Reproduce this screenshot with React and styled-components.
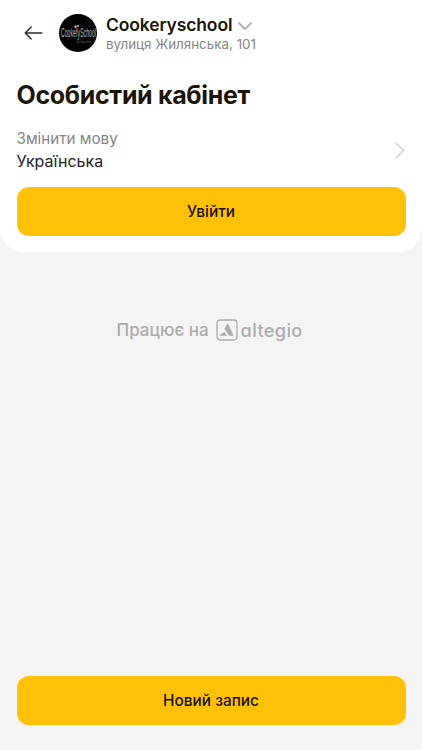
import React from "react";
import styled, { createGlobalStyle } from "styled-components";

const GlobalStyle = createGlobalStyle`
  * {
    box-sizing: border-box;
  }
  body {
    font-family: Inter, sans-serif;
    margin: 0;
    background: #f4f4f4;
    color: #1b1607;
  }
  h1, p {
    margin: 0;
  }
  button {
    font-family: inherit;
    border: none;
    cursor: pointer;
  }
`;

const Page = styled.div`
  display: flex;
  flex-direction: column;
  height: 100vh;
  min-height: 400px;
  overflow: hidden;
`;

const ProfileCard = styled.section`
  height: 252px;
  padding: 12px 16.5px 0;
  background: #fff;
  border-radius: 0 0 24px 24px;
`;

const Header = styled.header`
  display: flex;
  align-items: center;
  height: 42px;
`;

const IconButton = styled.button`
  display: flex;
  align-items: center;
  width: 42px;
  padding: 0 0 0 7px;
  background: none;
`;

const Avatar = styled.svg`
  display: block;
  flex: none;
  width: 38px;
  height: 38px;
`;

const Company = styled.div`
  margin-left: 9.5px;
  white-space: nowrap;
`;

const CompanyName = styled.div`
  display: flex;
  align-items: center;
  gap: 6px;
  font-size: 17.5px;
  font-weight: 600;
  letter-spacing: -0.13px;
  line-height: 22px;

  svg {
    margin-top: 3px;
  }
`;

const Address = styled.p`
  font-size: 13.4px;
  line-height: 17px;
  color: #858585;
`;

const Title = styled.h1`
  margin-top: 25px;
  font-size: 25px;
  font-weight: 700;
  letter-spacing: -0.34px;
  line-height: 32px;
  white-space: nowrap;
`;

const LanguageRow = styled.div`
  display: flex;
  align-items: center;
  justify-content: space-between;
  height: 46px;
  margin-top: 16px;
`;

const RowLabel = styled.p`
  font-size: 15.2px;
  line-height: 23px;
  color: #858585;
`;

const RowValue = styled.p`
  font-size: 16px;
  line-height: 23px;
  color: #24222d;
`;

const MainButton = styled.button`
  display: block;
  width: 100%;
  height: 49px;
  padding: 0;
  border-radius: 12px;
  background: #ffc107;
  color: #1b1200;
  font-size: 15.4px;
  font-weight: 500;
  line-height: 49px;
`;

const SignIn = styled.div`
  margin-top: 14px;
`;

const PoweredBy = styled.div`
  display: flex;
  align-items: center;
  height: 24px;
  margin: 66px 0 0 116.5px;
  font-size: 17px;
  font-weight: 500;
  color: #acacac;
  white-space: nowrap;
`;

const BrandMark = styled.svg`
  flex: none;
  width: 22px;
  height: 22px;
  margin: 0 3px 0 7px;
`;

const BrandName = styled.span`
  font-size: 18.2px;
  font-weight: 550;
  font-feature-settings: "cv11" 1;
  letter-spacing: 0.35px;
  line-height: 24px;
`;

const Footer = styled.footer`
  margin-top: auto;
  padding: 0 16.5px 25px;
`;

const ArrowLeft = () => (
  <svg width="19" height="14" viewBox="0 0 19 14" fill="none" stroke="#2b2833" strokeWidth="1.4">
    <path d="M17.8 7H1.2M7.2 1 1.2 7l6 6" strokeLinecap="round" strokeLinejoin="round" />
  </svg>
);

const ChevronDown = () => (
  <svg width="14" height="9" viewBox="0 0 14 9" fill="none" stroke="#adadad" strokeWidth="1.9">
    <path d="m1 1.2 6 6 6-6" strokeLinecap="round" strokeLinejoin="round" />
  </svg>
);

const ChevronRight = () => (
  <svg width="11" height="17" viewBox="0 0 11 17" fill="none" stroke="#cfcfcf" strokeWidth="1.5">
    <path d="m1.2 1.3 7.6 7.2-7.6 7.2" strokeLinecap="round" strokeLinejoin="round" />
  </svg>
);

const CompanyLogo = () => (
  <Avatar viewBox="0 0 38 38" fontFamily="Liberation Sans, sans-serif">
    <circle cx="19" cy="19" r="19" fill="#020202" />
    <text transform="translate(2 23) scale(0.43 1)" fontSize="12" fill="#b8b8b8">
      CookerySchool
    </text>
    <text transform="translate(18 29) scale(0.58 1)" fontSize="3" fill="#777">
      by Cookery School
    </text>
    <path d="M17.4 13.5 18.4 18l0.8-4.5" stroke="#a83240" strokeWidth="1" fill="none" />
    <circle cx="16.6" cy="12.6" r="1.1" fill="#eee" />
    <circle cx="19" cy="12" r="0.9" fill="#c9c9c9" />
  </Avatar>
);

const App = () => {
  return (
    <>
      <GlobalStyle />
      <Page>
        <ProfileCard>
          <Header>
            <IconButton aria-label="Назад">
              <ArrowLeft />
            </IconButton>
            <CompanyLogo />
            <Company>
              <CompanyName>
                <span>Cookeryschool</span>
                <ChevronDown />
              </CompanyName>
              <Address>вулиця Жилянська, 101</Address>
            </Company>
          </Header>
          <Title>Особистий кабінет</Title>
          <LanguageRow>
            <div>
              <RowLabel>Змінити мову</RowLabel>
              <RowValue>Українська</RowValue>
            </div>
            <ChevronRight />
          </LanguageRow>
          <SignIn>
            <MainButton>Увійти</MainButton>
          </SignIn>
        </ProfileCard>

        <PoweredBy>
          <span>Працює на</span>
          <BrandMark viewBox="0 0 22 22">
            <rect x="1" y="1" width="20" height="20" rx="3.2" fill="none" stroke="#acacac" strokeWidth="1.3" />
            <path d="M11.8 4.3 17.8 16.7h-4.6L8.4 9.8z" fill="#acacac" />
            <path d="M3.8 16.7v-1l4.5-2.7 2.9 3.7z" fill="#acacac" />
          </BrandMark>
          <BrandName>altegio</BrandName>
        </PoweredBy>

        <Footer>
          <MainButton>Новий запис</MainButton>
        </Footer>
      </Page>
    </>
  );
};

export default App;
